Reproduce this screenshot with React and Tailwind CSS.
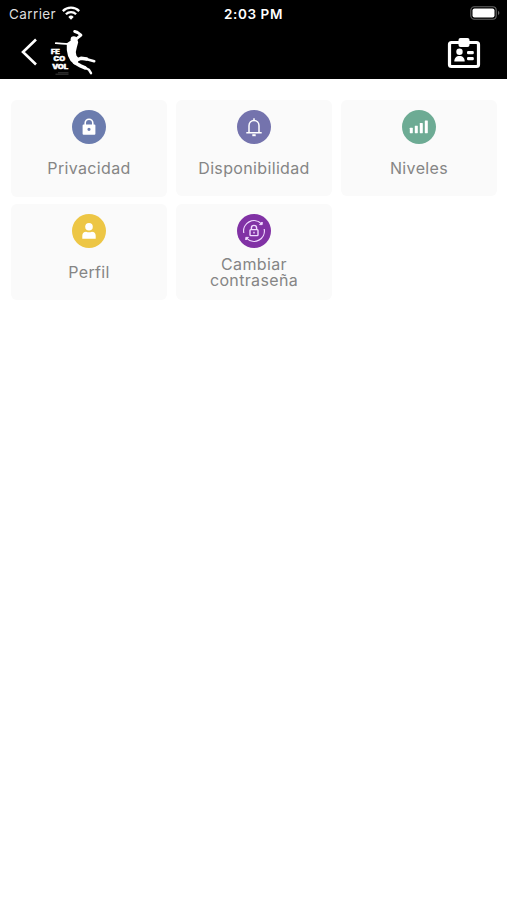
import React from 'react'

const LockIcon = () => (
  <svg viewBox="0 0 34 34" className="w-[34px] h-[34px]">
    <path d="M13.2 15.5v-2.4a3.8 3.8 0 0 1 7.6 0v2.4" fill="none" stroke="#fff" strokeWidth="1.6" />
    <path fillRule="evenodd" fill="#fff" d="M11.6 14.6h10.8q1 0 1 1v8.2q0 1-1 1H11.6q-1 0-1-1v-8.2q0-1 1-1zM17 17.7a1.6 1.6 0 1 0 0 3.2 1.6 1.6 0 0 0 0-3.2z" />
  </svg>
)

const BellIcon = () => (
  <svg viewBox="0 0 34 34" className="w-[34px] h-[34px]" fill="none" stroke="#fff" strokeWidth="1.5">
    <path d="M12 22.2v-6.4c0-3.1 2-5.3 5-5.3s5 2.2 5 5.3v6.4" />
    <path d="M9.3 22.7h15.4M17 8.3v2.2" />
    <path d="M15.3 25.2h3.4" strokeWidth="2" />
  </svg>
)

const LevelsIcon = () => (
  <svg viewBox="0 0 34 34" className="w-[34px] h-[34px]" fill="#fff">
    <rect x="7.8" y="17.8" width="3" height="5.4" rx=".4" />
    <rect x="12.8" y="15.7" width="3" height="7.5" rx=".4" />
    <rect x="17.8" y="13" width="3" height="10.2" rx=".4" />
    <rect x="22.8" y="10.6" width="3" height="12.6" rx=".4" />
  </svg>
)

const UserIcon = () => (
  <svg viewBox="0 0 34 34" className="w-[34px] h-[34px]" fill="#fff">
    <circle cx="17" cy="12.8" r="3.8" />
    <path d="M10.3 24.7v-3c0-2.4 1.6-3.9 3.8-3.9q2.9 1 5.8 0c2.2 0 3.8 1.5 3.8 3.9v3z" />
  </svg>
)

const PasswordIcon = () => (
  <svg viewBox="0 0 34 34" className="w-[34px] h-[34px]" fill="none" stroke="#f0d9ff" strokeWidth="1.2">
    <path d="M6.8 19A10.4 10.4 0 0 1 24.3 9.6" />
    <path d="M27.2 15A10.4 10.4 0 0 1 9.7 24.4" />
    <path d="M25.2 8v2.6h-2.6zM8.8 26v-2.6h2.6z" fill="#f0d9ff" strokeWidth="1" />
    <rect x="13" y="15.6" width="8" height="6" rx=".8" strokeWidth="1.4" />
    <path d="M14.4 15.6V14a2.6 2.6 0 0 1 5.2 0v1.6M17 17.8v1.6" strokeWidth="1.4" />
  </svg>
)

const Logo = () => (
  <svg viewBox="0 0 48 50" className="ml-3 w-12 h-[50px]" fill="#fff">
    {/* raised arm, left arm, legs */}
    <g fill="none" stroke="#fff" strokeLinecap="round" strokeLinejoin="round">
      <path d="M24.6 3.4l3 1.2M27 4l4 3.2-4.6 3.6" strokeWidth="2.8" />
      <path d="M5.8 15.2l6 .4 8 .6" strokeWidth="1.8" />
      <path d="M26 32.4l5-2.2 5.6.8" strokeWidth="3.4" />
      <path d="M36 31l8.2 2.2" strokeWidth="2.6" />
      <path d="M24.5 34.5l6 3.4 4.6 2" strokeWidth="3.6" />
      <path d="M35 39.8l4 2 2 3.4" strokeWidth="2.4" />
    </g>
    <circle cx="23.8" cy="11.4" r="3.2" />
    <path d="M16.8 15.2l4-2.6 6.4-1.6 1 3.2-1.4 5.4-1 4.4.6 3.4 2.2 2.8-.8 4.8-3 1.6-4.2-3.6-2.6-5-1.2-6z" />
    <g fontFamily="Inter, sans-serif" fontWeight="800" fontSize="5.9" stroke="#fff" strokeWidth=".5">
      <text x="1" y="26.2" textLength="8.8" lengthAdjust="spacingAndGlyphs">FE</text>
      <text x="3.5" y="33.4" textLength="11.5" lengthAdjust="spacingAndGlyphs">CO</text>
      <text x="2.2" y="40.6" textLength="16" lengthAdjust="spacingAndGlyphs">VOL</text>
    </g>
    <path d="M8 44.8h10.5M5.5 46.2h13" stroke="#3c3c3c" strokeWidth="1" fill="none" />
  </svg>
)

const items = [
  { label: 'Privacidad', color: 'bg-[#6b7cae]', icon: LockIcon, height: 'h-[97px]' },
  { label: 'Disponibilidad', color: 'bg-[#7473ad]', icon: BellIcon, height: 'h-24' },
  { label: 'Niveles', color: 'bg-[#6dab94]', icon: LevelsIcon, height: 'h-24' },
  { label: 'Perfil', color: 'bg-[#edc645]', icon: UserIcon, height: 'h-24' },
  { label: 'Cambiar contraseña', color: 'bg-[#8132a5]', icon: PasswordIcon, height: 'h-24' },
]

function Card({ label, color, icon: Icon, height }) {
  return (
    <button className={`${height} flex flex-col items-center rounded-md bg-[#fafafa] pt-[10px]`}>
      <span className={`${color} w-[34px] h-[34px] shrink-0 rounded-full`}><Icon /></span>
      <span className="flex h-12 w-[120px] items-center justify-center text-center text-[16px] leading-4 tracking-[.35px] text-[#858585]">{label}</span>
    </button>
  )
}

export default function App() {
  return (
    <div className="h-[900px] w-[507px] overflow-hidden bg-white font-['Inter',sans-serif]">
      <header className="h-[79px] bg-black text-white">
        <div className="grid h-7 grid-cols-3 items-center pl-[9px] pr-[7px] text-[13.5px]">
          <div className="flex items-center gap-[6px] text-[#ddd]">
            <span className="tracking-[.4px]">Carrier</span>
            <svg viewBox="0 0 18 14" className="mb-0.5 h-[14px] w-[18px]" fill="none" stroke="#fff" strokeWidth="2.3">
              <path d="M.8 5.1a11.6 11.6 0 0 1 16.4 0M3.9 8.2a7.2 7.2 0 0 1 10.2 0" />
              <path d="M9 13.7l-2.7-2.8a3.9 3.9 0 0 1 5.4 0z" fill="#fff" stroke="none" />
            </svg>
          </div>
          <span className="pr-[2px] text-center text-[13.5px] font-semibold tracking-[.6px]">2:03 PM</span>
          <svg viewBox="0 0 30 14" className="mb-0.5 h-[14px] w-[30px] justify-self-end">
            <rect x=".8" y=".8" width="25.4" height="12.4" rx="3.5" fill="none" stroke="#666" strokeWidth="1.1" />
            <rect x="2.5" y="2.5" width="22" height="9" rx="2" fill="#fff" />
            <path d="M28 4.8q2.8 2.2 0 4.4z" fill="#666" />
          </svg>
        </div>
        <div className="flex h-[50px] items-center pl-5 pr-[26px]">
          <svg viewBox="0 0 18 28" className="mb-0.5 h-7 w-[18px]" fill="none" stroke="#fff" strokeWidth="2.6">
            <path d="M16 1.5L3 14l13 12.5" />
          </svg>
          <Logo />
          <svg viewBox="0 0 34 32" className="mb-px ml-auto h-8 w-[34px]" fill="#fff">
            <rect x="2.5" y="5.5" width="29" height="24" rx="2" fill="none" stroke="#fff" strokeWidth="3.2" />
            <rect x="11.5" y="1" width="11" height="9" rx="2" />
            <circle cx="12.5" cy="14.8" r="3.2" />
            <path d="M7.3 24.6c0-3.6 2-5.6 5.2-5.6s5.2 2 5.2 5.6z" />
            <rect x="20" y="14" width="6.8" height="3.2" rx="1.2" />
            <rect x="20" y="20" width="6.8" height="3.2" rx="1.2" />
          </svg>
        </div>
      </header>
      <main className="grid grid-cols-3 items-start gap-x-[9px] gap-y-[7px] pl-[11px] pr-[10px] pt-[21px]">
        {items.map(item => <Card key={item.label} {...item} />)}
      </main>
    </div>
  )
}
